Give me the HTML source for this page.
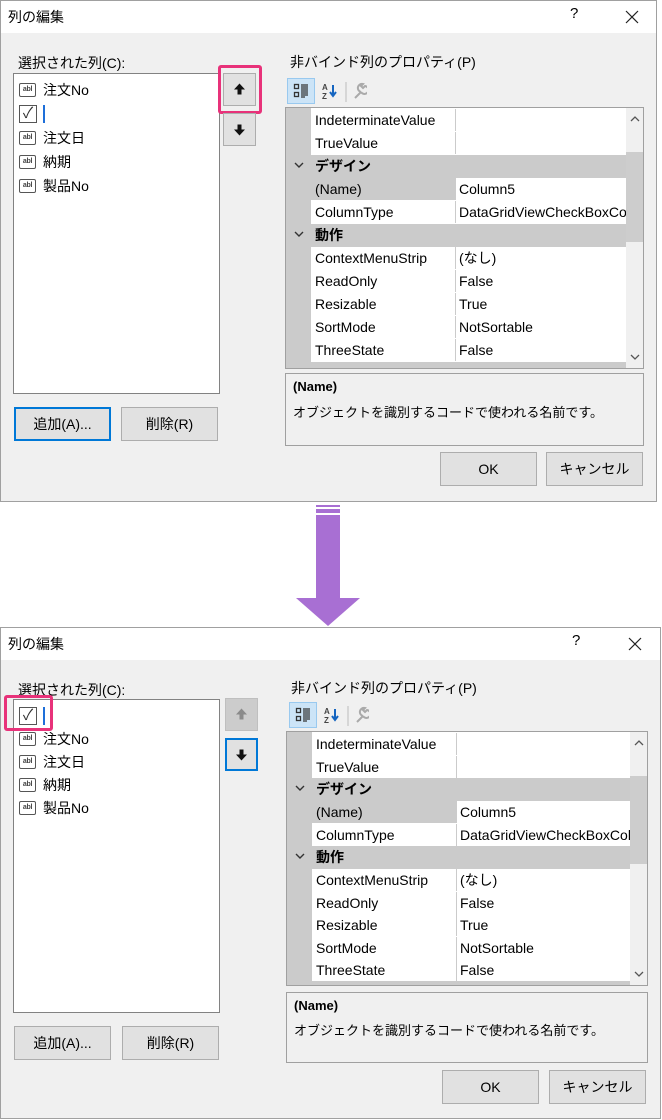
<!DOCTYPE html>
<html><head><meta charset="utf-8">
<style>
*{box-sizing:border-box;margin:0;padding:0}
body{width:662px;height:1120px;background:#fff;position:relative;overflow:hidden;font-family:"Liberation Sans","Noto Sans CJK JP",sans-serif;font-size:13px;color:#000}
.dlg{position:absolute;left:0;border:1px solid #a0a0a0;background:#f0f0f0}
.tb{position:absolute;left:0;top:0;right:0;height:32px;background:#fff}
.tt{position:absolute;left:7px;top:6px;font-size:14px}
.q{position:absolute;top:4px;font-size:15px}
.a{position:absolute}
.lb{position:absolute;background:#fff;border:1px solid #828282}
.it{position:absolute;left:5px;height:22px;font-size:14px;white-space:nowrap;display:flex;align-items:center}
.ic{display:inline-block;width:17px;height:14px;border:1.5px solid #555;border-radius:2px;font-size:7px;line-height:11px;text-align:center;margin-right:7px;font-weight:bold;color:#444;letter-spacing:-.3px}
.cb{display:inline-block;width:18px;height:18px;border:1.5px solid #555;text-align:center;line-height:16px;font-size:15px;color:#333}
.caret{display:inline-block;width:2px;height:18px;background:#1e6fd9;margin-left:6px}
.btn{position:absolute;background:#e1e1e1;border:1px solid #adadad;text-align:center;font-size:14px}
.pk{position:absolute;border:3px solid #e8327a;border-radius:3px}
.grid{position:absolute;border:1px solid #a0a0a0;background:#fff;overflow:hidden}
.gut{position:absolute;left:0;top:0;width:25px;bottom:0;background:#cbcbcb}
.row{position:absolute;left:25px;height:22px;background:#fff;font-size:14px;line-height:22px}
.row .n{position:absolute;left:4px;top:0;height:22px;padding-right:4px}
.row .v{position:absolute;left:144px;top:0;height:22px;border-left:1px solid #cbcbcb;padding-left:3px;width:200px;white-space:nowrap;overflow:hidden;background:#fff}
.cat{position:absolute;left:0;height:23px;background:#cbcbcb;font-size:14px;font-weight:bold;line-height:22px}
.cat svg{position:absolute;left:8px;top:7px}
.sb{position:absolute;top:0;bottom:0;width:18px;background:#f0f0f0}
.desc{position:absolute;border:1px solid #a0a0a0;background:#f0f0f0;font-size:13px}
</style></head><body>

<!-- Dialog 1 -->
<div class="dlg" style="top:0;width:657px;height:502px">
  <div class="tb"><span class="tt">列の編集</span><span class="q" style="left:569px">?</span>
    <svg class="a" style="left:624px;top:9px" width="14" height="14"><path d="M1 1L13 13M13 1L1 13" stroke="#222" stroke-width="1.2"/></svg></div>
  <div class="a" style="left:17px;top:52px;font-size:14px">選択された列(C):</div>
  <div class="lb" style="left:12px;top:72px;width:207px;height:321px">
    <div class="it" style="top:5px"><span class="ic">abl</span>注文No</div>
    <div class="it" style="top:29px"><span class="cb">✓</span><span class="caret"></span></div>
    <div class="it" style="top:53px"><span class="ic">abl</span>注文日</div>
    <div class="it" style="top:77px"><span class="ic">abl</span>納期</div>
    <div class="it" style="top:101px"><span class="ic">abl</span>製品No</div>
  </div>
  <div class="btn" style="left:222px;top:72px;width:33px;height:33px"><svg width="31" height="31"><path d="M15.5 9.5 L10 15.5 H13.5 V20.5 H17.5 V15.5 H21Z" fill="#111"/></svg></div>
  <div class="pk" style="left:217px;top:64px;width:44px;height:49px"></div>
  <div class="btn" style="left:222px;top:112px;width:33px;height:33px"><svg width="31" height="31"><path d="M15.5 21.5 L10 15.5 H13.5 V10.5 H17.5 V15.5 H21Z" fill="#111"/></svg></div>
  <div class="btn" style="left:13px;top:406px;width:97px;height:34px;border:2px solid #0078d7;line-height:30px">追加(A)...</div>
  <div class="btn" style="left:120px;top:406px;width:97px;height:34px;line-height:32px">削除(R)</div>

  <div class="a" style="left:289px;top:51px;font-size:14px">非バインド列のプロパティ(P)</div>
  <div class="a" style="left:286px;top:77px;width:28px;height:26px;background:#cce4f7;border:1px solid #99c9ef"></div>
  <svg class="a" style="left:286px;top:77px" width="80" height="26">
    <g fill="none" stroke="#333" stroke-width="1.3"><rect x="7.5" y="6.5" width="4" height="4"/><rect x="7.5" y="14.5" width="4" height="4"/></g>
    <g stroke="#333" stroke-width="1.2"><path d="M14 7h7M14 9h7M14 11h7M14 13h7M14 15h7M14 17h7M14 19h4"/></g>
    <text x="35" y="12" font-size="8" font-weight="bold" fill="#444" font-family="Liberation Sans">A</text>
    <text x="35" y="21" font-size="8" font-weight="bold" fill="#444" font-family="Liberation Sans">Z</text>
    <path d="M46 7v10M43 14l3 4 3-4" stroke="#1565c0" stroke-width="2" fill="none"/>
    <path d="M59 4v20" stroke="#bbb"/>
    <path d="M68 20l6-6M74 14a4 4 0 1 0 4-6l-2 2-2-2 2-2a4 4 0 0 0-2 8" stroke="#aaa" stroke-width="2" fill="none"/>
  </svg>
  <div class="grid" style="left:284px;top:106px;width:359px;height:262px">
    <div class="gut"></div>
    <div class="row" style="top:1px;width:315px"><span class="n">IndeterminateValue</span><span class="v"></span></div>
    <div class="row" style="top:24px;width:315px"><span class="n">TrueValue</span><span class="v"></span></div>
    <div class="cat" style="top:47px;width:340px"><svg width="10" height="8"><path d="M1 1l4 4 4-4" stroke="#333" stroke-width="1.4" fill="none"/></svg><span style="position:absolute;left:29px">デザイン</span></div>
    <div class="row" style="top:70px;width:315px;background:#cbcbcb"><span class="n">(Name)</span><span class="v">Column5</span></div>
    <div class="row" style="top:93px;width:315px"><span class="n">ColumnType</span><span class="v">DataGridViewCheckBoxColumn</span></div>
    <div class="cat" style="top:116px;width:340px"><svg width="10" height="8"><path d="M1 1l4 4 4-4" stroke="#333" stroke-width="1.4" fill="none"/></svg><span style="position:absolute;left:29px">動作</span></div>
    <div class="row" style="top:139px;width:315px"><span class="n">ContextMenuStrip</span><span class="v">(なし)</span></div>
    <div class="row" style="top:162px;width:315px"><span class="n">ReadOnly</span><span class="v">False</span></div>
    <div class="row" style="top:185px;width:315px"><span class="n">Resizable</span><span class="v">True</span></div>
    <div class="row" style="top:208px;width:315px"><span class="n">SortMode</span><span class="v">NotSortable</span></div>
    <div class="row" style="top:231px;width:315px"><span class="n">ThreeState</span><span class="v">False</span></div>
    <div class="cat" style="top:254px;width:340px"></div>
    <div class="sb" style="left:340px"><div style="position:absolute;left:0;top:44px;width:18px;height:90px;background:#cdcdcd"></div>
      <svg class="a" style="left:4px;top:7px" width="10" height="7"><path d="M1 6l4-4 4 4" stroke="#555" stroke-width="1.3" fill="none"/></svg>
      <svg class="a" style="left:4px;top:246px" width="10" height="7"><path d="M1 1l4 4 4-4" stroke="#555" stroke-width="1.3" fill="none"/></svg></div>
  </div>
  <div class="desc" style="left:284px;top:372px;width:359px;height:73px"><div style="position:absolute;left:7px;top:5px;font-weight:bold">(Name)</div><div style="position:absolute;left:7px;top:28px">オブジェクトを識別するコードで使われる名前です。</div></div>
  <div class="btn" style="left:439px;top:451px;width:97px;height:34px;line-height:32px">OK</div>
  <div class="btn" style="left:545px;top:451px;width:97px;height:34px;line-height:32px">キャンセル</div>
</div>

<!-- Arrow -->
<div class="a" style="left:316px;top:505px;width:24px;height:2px;background:#a86fd3"></div>
<div class="a" style="left:316px;top:509px;width:24px;height:4px;background:#a86fd3"></div>
<div class="a" style="left:316px;top:515px;width:24px;height:84px;background:#a86fd3"></div>
<svg class="a" style="left:296px;top:598px" width="64" height="28"><path d="M0 0H64L32 28Z" fill="#a86fd3"/></svg>

<!-- Dialog 2 -->
<div class="dlg" style="top:627px;width:661px;height:492px">
  <div class="tb"><span class="tt">列の編集</span><span class="q" style="left:571px">?</span>
    <svg class="a" style="left:627px;top:9px" width="14" height="14"><path d="M1 1L13 13M13 1L1 13" stroke="#222" stroke-width="1.2"/></svg></div>
  <div class="a" style="left:17px;top:52px;font-size:14px">選択された列(C):</div>
  <div class="lb" style="left:12px;top:71px;width:207px;height:314px">
    <div class="it" style="top:5px"><span class="cb">✓</span><span class="caret"></span></div>
    <div class="it" style="top:28px"><span class="ic">abl</span>注文No</div>
    <div class="it" style="top:51px"><span class="ic">abl</span>注文日</div>
    <div class="it" style="top:74px"><span class="ic">abl</span>納期</div>
    <div class="it" style="top:97px"><span class="ic">abl</span>製品No</div>
  </div>
  <div class="pk" style="left:3px;top:67px;width:49px;height:36px"></div>
  <div class="btn" style="left:224px;top:70px;width:33px;height:33px;background:#cccccc;border-color:#bfbfbf"><svg width="31" height="31"><path d="M15.5 9.5 L10 15.5 H13.5 V20.5 H17.5 V15.5 H21Z" fill="#8a8a8a"/></svg></div>
  <div class="btn" style="left:224px;top:110px;width:33px;height:33px;border:2px solid #0078d7"><svg width="29" height="29"><path d="M14.5 20.5 L9 14.5 H12.5 V9.5 H16.5 V14.5 H20Z" fill="#111"/></svg></div>
  <div class="btn" style="left:13px;top:398px;width:97px;height:34px;line-height:32px">追加(A)...</div>
  <div class="btn" style="left:121px;top:398px;width:97px;height:34px;line-height:32px">削除(R)</div>

  <div class="a" style="left:290px;top:50px;font-size:14px">非バインド列のプロパティ(P)</div>
  <div class="a" style="left:288px;top:74px;width:28px;height:26px;background:#cce4f7;border:1px solid #99c9ef"></div>
  <svg class="a" style="left:288px;top:74px" width="80" height="26">
    <g fill="none" stroke="#333" stroke-width="1.3"><rect x="7.5" y="6.5" width="4" height="4"/><rect x="7.5" y="14.5" width="4" height="4"/></g>
    <g stroke="#333" stroke-width="1.2"><path d="M14 7h7M14 9h7M14 11h7M14 13h7M14 15h7M14 17h7M14 19h4"/></g>
    <text x="35" y="12" font-size="8" font-weight="bold" fill="#444" font-family="Liberation Sans">A</text>
    <text x="35" y="21" font-size="8" font-weight="bold" fill="#444" font-family="Liberation Sans">Z</text>
    <path d="M46 7v10M43 14l3 4 3-4" stroke="#1565c0" stroke-width="2" fill="none"/>
    <path d="M59 4v20" stroke="#bbb"/>
    <path d="M68 20l6-6M74 14a4 4 0 1 0 4-6l-2 2-2-2 2-2a4 4 0 0 0-2 8" stroke="#aaa" stroke-width="2" fill="none"/>
  </svg>
  <div class="grid" style="left:285px;top:103px;width:362px;height:255px">
    <div class="gut"></div>
    <div class="row" style="top:1px;width:318px"><span class="n">IndeterminateValue</span><span class="v"></span></div>
    <div class="row" style="top:24px;width:318px"><span class="n">TrueValue</span><span class="v"></span></div>
    <div class="cat" style="top:46px;width:343px"><svg width="10" height="8"><path d="M1 1l4 4 4-4" stroke="#333" stroke-width="1.4" fill="none"/></svg><span style="position:absolute;left:29px">デザイン</span></div>
    <div class="row" style="top:69px;width:318px;background:#cbcbcb"><span class="n">(Name)</span><span class="v">Column5</span></div>
    <div class="row" style="top:92px;width:318px"><span class="n">ColumnType</span><span class="v">DataGridViewCheckBoxColumn</span></div>
    <div class="cat" style="top:114px;width:343px"><svg width="10" height="8"><path d="M1 1l4 4 4-4" stroke="#333" stroke-width="1.4" fill="none"/></svg><span style="position:absolute;left:29px">動作</span></div>
    <div class="row" style="top:137px;width:318px"><span class="n">ContextMenuStrip</span><span class="v">(なし)</span></div>
    <div class="row" style="top:160px;width:318px"><span class="n">ReadOnly</span><span class="v">False</span></div>
    <div class="row" style="top:182px;width:318px"><span class="n">Resizable</span><span class="v">True</span></div>
    <div class="row" style="top:205px;width:318px"><span class="n">SortMode</span><span class="v">NotSortable</span></div>
    <div class="row" style="top:227px;width:318px"><span class="n">ThreeState</span><span class="v">False</span></div>
    <div class="cat" style="top:249px;width:343px"></div>
    <div class="sb" style="left:343px"><div style="position:absolute;left:0;top:44px;width:18px;height:88px;background:#cdcdcd"></div>
      <svg class="a" style="left:4px;top:7px" width="10" height="7"><path d="M1 6l4-4 4 4" stroke="#555" stroke-width="1.3" fill="none"/></svg>
      <svg class="a" style="left:4px;top:239px" width="10" height="7"><path d="M1 1l4 4 4-4" stroke="#555" stroke-width="1.3" fill="none"/></svg></div>
  </div>
  <div class="desc" style="left:285px;top:364px;width:362px;height:71px"><div style="position:absolute;left:7px;top:5px;font-weight:bold">(Name)</div><div style="position:absolute;left:7px;top:27px">オブジェクトを識別するコードで使われる名前です。</div></div>
  <div class="btn" style="left:441px;top:442px;width:97px;height:34px;line-height:32px">OK</div>
  <div class="btn" style="left:548px;top:442px;width:97px;height:34px;line-height:32px">キャンセル</div>
</div>
</body></html>
